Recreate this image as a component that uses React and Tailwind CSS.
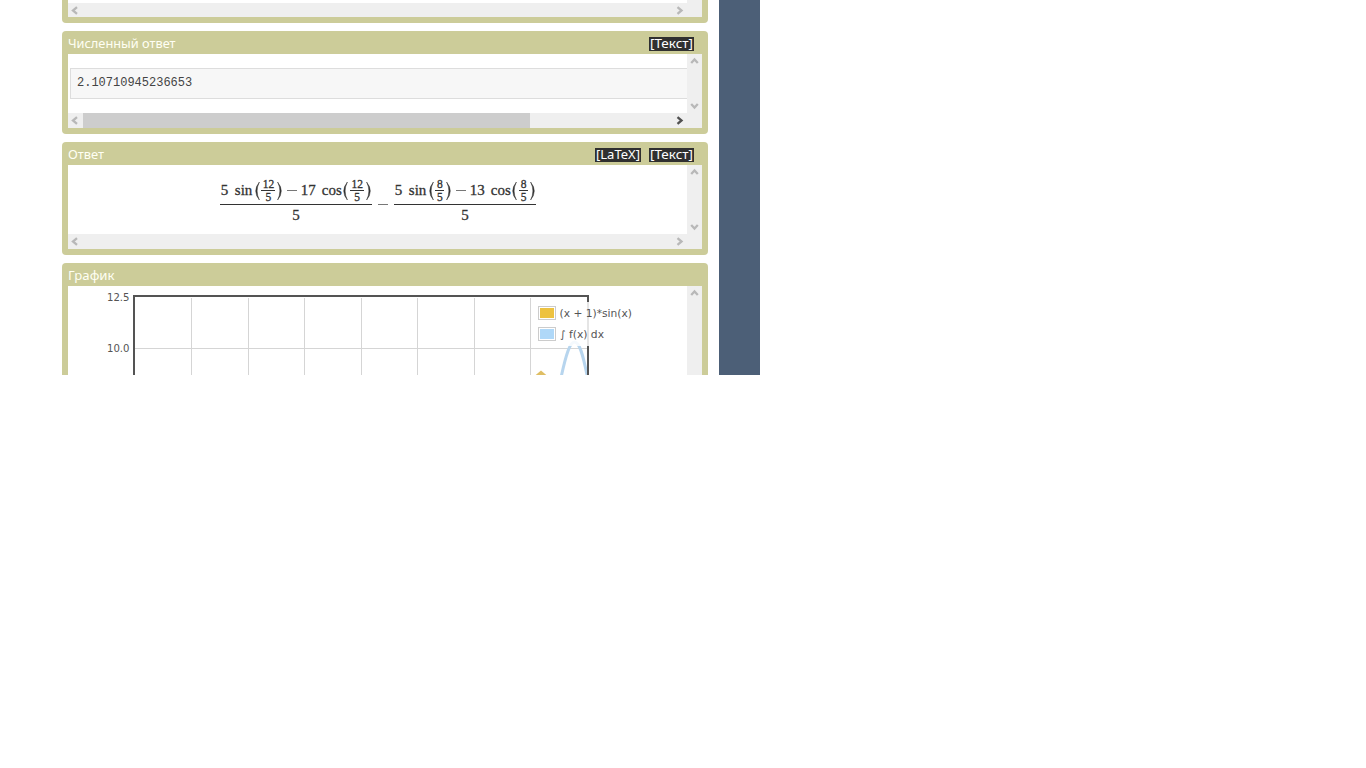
const chevrons = {
  left: 'M9 4.2 L5 7.5 L9 10.8',
  right: 'M5.5 4.2 L9.5 7.5 L5.5 10.8',
  up: 'M4.2 9 L7.5 5.4 L10.8 9',
  down: 'M4.2 6 L7.5 9.6 L10.8 6',
};

function Arrow({ dir, active }) {
  return (
    <svg className="block h-[15px] w-[15px] shrink-0" viewBox="0 0 15 15">
      <path d={chevrons[dir]} fill="none" stroke={active ? '#505050' : '#b8b8b8'} strokeWidth="2.3" />
    </svg>
  );
}

function HorizontalBar({ thumb }) {
  return (
    <div className="flex h-[15px] w-full shrink-0 bg-[#efefef]">
      <Arrow dir="left" />
      {thumb && <div className="w-[447px] bg-[#cdcdcd]" />}
      <div className="grow" />
      <Arrow dir="right" active={thumb} />
      <div className="w-[15px]" />
    </div>
  );
}

function VerticalBar({ down = true }) {
  return (
    <div className="flex w-[15px] shrink-0 flex-col justify-between bg-[#efefef]">
      <Arrow dir="up" />
      {down && <Arrow dir="down" />}
    </div>
  );
}

function Heading({ title, width, children }) {
  return (
    <div className="flex h-[23px] items-center justify-between pr-[8px] pt-[2px]">
      <Label text={title} width={width} color="#fffff4" />
      <div className="flex gap-[8px]">{children}</div>
    </div>
  );
}

function Label({ text, width, color }) {
  return (
    <svg className="block h-[15px] overflow-visible" style={{ width }}>
      <text x="0" y="12" fill={color} fontSize="12.5" fontFamily="'Noto Sans', sans-serif" textLength={width} lengthAdjust="spacingAndGlyphs">
        {text}
      </text>
    </svg>
  );
}

function Tag({ text }) {
  return (
    <div className="h-[14px] bg-[#303030] px-[1px]">
      <div className="-mt-px">
        <Label text={text} width={text === '[LaTeX]' ? 44 : 43} color="#ffffff" />
      </div>
    </div>
  );
}

function Cell({ w, children }) {
  return (
    <span className="flex shrink-0 justify-center whitespace-nowrap" style={{ width: w }}>
      {children}
    </span>
  );
}

function Paren({ right }) {
  return (
    <svg className="block h-[20px] w-[6px] shrink-0" viewBox="0 0 6 20">
      <path
        d={right ? 'M0.6 1 Q8 10 0.6 19 Q5.2 10 0.6 1 Z' : 'M5.4 1 Q-2 10 5.4 19 Q0.8 10 5.4 1 Z'}
        fill="#333"
        stroke="#333"
        strokeWidth="0.5"
      />
    </svg>
  );
}

function Small({ top, w }) {
  return (
    <span className="flex shrink-0 flex-col items-center text-[11.5px] leading-[11px]" style={{ width: w }}>
      <span className="h-[11px]">{top}</span>
      <span className="h-px w-full bg-[#333]" />
      <span className="h-[11px] leading-[12px]">5</span>
    </span>
  );
}

function Minus() {
  return <span className="h-px w-[10px] shrink-0 bg-[#777]" />;
}

function Fraction({ factor, top, smallWidth, width }) {
  return (
    <div className="flex flex-col items-center" style={{ width }}>
      <div className="flex h-[26px] w-full items-center pb-px">
        <Cell w={9}>5</Cell>
        <span className="w-[5px]" />
        <Cell w={20}>sin</Cell>
        <Paren />
        <span className="w-[2px]" />
        <Small top={top} w={smallWidth} />
        <span className="w-[2px]" />
        <Paren right />
        <span className="w-[4px]" />
        <Minus />
        <span className="w-[4px]" />
        <Cell w={15}>{factor}</Cell>
        <span className="w-[6px]" />
        <Cell w={21}>cos</Cell>
        <Paren />
        <span className="w-[2px]" />
        <Small top={top} w={smallWidth} />
        <span className="w-[2px]" />
        <Paren right />
      </div>
      <div className="h-px w-full bg-[#333]" />
      <div className="h-[20px] leading-[20px]">5</div>
    </div>
  );
}

function ChartText({ x, y, width, children }) {
  return (
    <text x={x} y={y} textLength={width} lengthAdjust="spacingAndGlyphs">
      {children}
    </text>
  );
}

function Chart() {
  return (
    <svg className="block h-[89px] w-[619px]" viewBox="68 286 619 89" fontFamily="'DejaVu Sans', sans-serif" fontSize="10" fill="#545454">
      <g fill="#d5d5d5">
        {[191, 248, 304, 361, 417, 474, 530].map((x) => (
          <rect key={x} x={x} y="298" width="1" height="77" />
        ))}
        <rect x="135" y="348" width="452" height="1" />
      </g>
      <path d="M560.5 380 C566 354 570 342 574.5 342 C579.5 342 583 354 588 380" fill="none" stroke="#b7d5ee" strokeWidth="3" />
      <path d="M534.5 376 L541 370.5 L547.5 376 Z" fill="#dfbe64" />
      <path d="M134 375 V296 H588 V375" fill="none" stroke="#545454" strokeWidth="2" />
      <rect x="533" y="302" width="104" height="44" fill="#fff" fillOpacity="0.85" />
      <rect x="538.5" y="306.5" width="17" height="13" fill="#fff" stroke="#ccc" />
      <rect x="540" y="308" width="14" height="10" fill="#edc240" />
      <rect x="538.5" y="327.5" width="17" height="13" fill="#fff" stroke="#ccc" />
      <rect x="540" y="329" width="14" height="10" fill="#afd8f8" />
      <ChartText x="107" y="301" width="22.5">12.5</ChartText>
      <ChartText x="107" y="352" width="22.5">10.0</ChartText>
      <ChartText x="559.5" y="317" width="72.5">(x + 1)*sin(x)</ChartText>
      <ChartText x="560" y="338" width="44">∫ f(x) dx</ChartText>
    </svg>
  );
}

export default function App() {
  return (
    <div className="h-[768px] w-[1366px] overflow-hidden bg-white">
      <div className="flex h-[375px] w-[760px] overflow-hidden">
        <main className="ml-[62px] flex w-[646px] shrink-0 flex-col gap-[8px]">
          <section className="h-[23px] shrink-0 rounded-b-[4px] bg-[#cccc99] px-[6px] pb-[6px]">
            <div className="flex h-[3px] bg-white">
              <div className="grow" />
              <div className="w-[15px] bg-[#efefef]" />
            </div>
            <div className="h-[14px] overflow-hidden">
              <HorizontalBar />
            </div>
          </section>

          <section className="h-[103px] shrink-0 rounded-[4px] bg-[#cccc99] px-[6px]">
            <Heading title="Численный ответ" width={107.5}>
              <Tag text="[Текст]" />
            </Heading>
            <div className="flex h-[59px] bg-white">
              <div className="flex grow items-start pl-[2px] pt-[14px]">
                <pre className="h-[31px] w-full border border-r-0 border-[#dddddd] bg-[#f7f7f7] pl-[6px] font-['Liberation_Mono',monospace] text-[12px] leading-[28px] text-[#444]">2.10710945236653</pre>
              </div>
              <VerticalBar />
            </div>
            <HorizontalBar thumb />
          </section>

          <section className="h-[113px] shrink-0 rounded-[4px] bg-[#cccc99] px-[6px]">
            <Heading title="Ответ" width={36}>
              <Tag text="[LaTeX]" />
              <Tag text="[Текст]" />
            </Heading>
            <div className="flex h-[69px] bg-white">
              <div className="flex grow items-start pl-[152px] pt-[13px] font-['Liberation_Serif',serif] text-[15px] leading-[19px] text-[#333] [-webkit-text-stroke:0.3px_#333]">
                <Fraction factor="17" top="12" smallWidth={14} width={152} />
                <div className="flex h-[53px] w-[22px] items-center justify-center">
                  <Minus />
                </div>
                <Fraction factor="13" top="8" smallWidth={9} width={142} />
              </div>
              <VerticalBar />
            </div>
            <HorizontalBar />
          </section>

          <section className="h-[112px] shrink-0 rounded-t-[4px] bg-[#cccc99] px-[6px]">
            <Heading title="График" width={46.5} />
            <div className="flex h-[89px] bg-white">
              <Chart />
              <VerticalBar down={false} />
            </div>
          </section>
        </main>
        <aside className="ml-[11px] h-full w-[41px] bg-[#4c5f77]" />
      </div>
    </div>
  );
}
